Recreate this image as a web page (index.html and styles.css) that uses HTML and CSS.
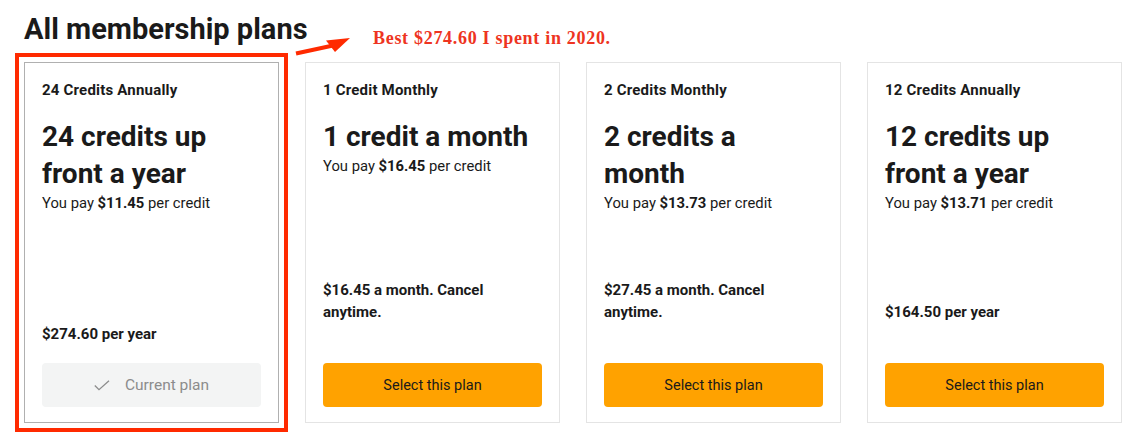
FILE: index.html
```html
<!DOCTYPE html>
<html lang="en">
<head>
<meta charset="utf-8">
<title>All membership plans</title>
<link rel="stylesheet" href="styles.css">
</head>
<body>
<div class="page">
  <div class="header">
    <h1 class="title">All membership plans</h1>
    <svg class="arrow" width="70" height="30" viewBox="0 0 70 30">
      <path d="M6 23.5 L50 14" stroke="#ff2a00" stroke-width="4" fill="none"/>
      <path d="M36 10.5 L60 8 L45 22 Z" fill="#ff2a00"/>
    </svg>
    <div class="note">Best $274.60 I spent in 2020.</div>
  </div>
  <div class="plans">
    <div class="card card-current">
      <div class="plan-name">24 Credits Annually</div>
      <div class="plan-title">24 credits up front a year</div>
      <div class="plan-pay">You pay <b>$11.45</b> per credit</div>
      <div class="spacer"></div>
      <div class="plan-price">$274.60 per year</div>
      <div class="btn btn-current">
        <svg class="check" width="16" height="11" viewBox="0 0 16 11"><path d="M0.8 5.5 L5 9.7 L15 0.8" stroke="#8c8c8c" stroke-width="1.3" fill="none"/></svg>
        <span>Current plan</span>
      </div>
    </div>
    <div class="card">
      <div class="plan-name">1 Credit Monthly</div>
      <div class="plan-title">1 credit a month</div>
      <div class="plan-pay">You pay <b>$16.45</b> per credit</div>
      <div class="spacer"></div>
      <div class="plan-price">$16.45 a month. Cancel anytime.</div>
      <div class="btn btn-select">Select this plan</div>
    </div>
    <div class="card">
      <div class="plan-name">2 Credits Monthly</div>
      <div class="plan-title">2 credits a month</div>
      <div class="plan-pay">You pay <b>$13.73</b> per credit</div>
      <div class="spacer"></div>
      <div class="plan-price">$27.45 a month. Cancel anytime.</div>
      <div class="btn btn-select">Select this plan</div>
    </div>
    <div class="card">
      <div class="plan-name">12 Credits Annually</div>
      <div class="plan-title">12 credits up front a year</div>
      <div class="plan-pay">You pay <b>$13.71</b> per credit</div>
      <div class="spacer"></div>
      <div class="plan-price">$164.50 per year</div>
      <div class="btn btn-select">Select this plan</div>
    </div>
  </div>
</div>
</body>
</html>
```
FILE: styles.css
```css
html, body {
  margin: 0;
  padding: 0;
  background: #ffffff;
}
body {
  font-family: Roboto, "Liberation Sans", sans-serif;
  color: #1a1a1a;
}
.page {
  box-sizing: border-box;
  min-height: 447px;
  padding: 12px 20px 24px 24px;
}
.header {
  position: relative;
  height: 50px;
}
.title {
  margin: 0;
  font-size: 29px;
  line-height: 34px;
  font-weight: 700;
  letter-spacing: 0;
  color: #1a1a1a;
}
.arrow {
  position: absolute;
  left: 266px;
  top: 18px;
}
.note {
  position: absolute;
  left: 349px;
  top: 16px;
  font-family: "Liberation Serif", "DejaVu Serif", serif;
  font-weight: 700;
  font-size: 18px;
  letter-spacing: 0.7px;
  color: #ee3421;
  white-space: nowrap;
}
.plans {
  display: grid;
  grid-template-columns: repeat(4, 255px);
  column-gap: 26px;
}
.card {
  box-sizing: border-box;
  height: 361px;
  border: 1px solid #e4e4e4;
  padding: 17px 17px 15px 17px;
  display: flex;
  flex-direction: column;
}
.card-current {
  border-color: #b0b0b0;
  outline: 4px solid #ff2a00;
  outline-offset: 5px;
}
.plan-name {
  font-size: 15px;
  line-height: 20px;
  font-weight: 700;
  letter-spacing: 0.2px;
}
.plan-title {
  margin-top: 18px;
  font-size: 28px;
  line-height: 37px;
  font-weight: 700;
}
.plan-pay {
  margin-top: 1px;
  font-size: 14.8px;
  line-height: 20px;
}
.plan-pay b {
  font-weight: 700;
}
.spacer {
  flex: 1;
}
.plan-price {
  max-width: 200px;
  font-size: 15px;
  line-height: 22px;
  font-weight: 700;
}
.btn {
  margin-top: 40px;
  height: 44px;
  border-radius: 4px;
  display: flex;
  align-items: center;
  justify-content: center;
  font-size: 14.5px;
}
.btn-select {
  background: #ffa200;
  color: #1a1a1a;
}
.btn-current {
  margin-top: 18px;
  background: #f3f4f4;
  color: #8c8c8c;
  font-size: 15.5px;
  gap: 15px;
}
.check {
  display: block;
}
```
